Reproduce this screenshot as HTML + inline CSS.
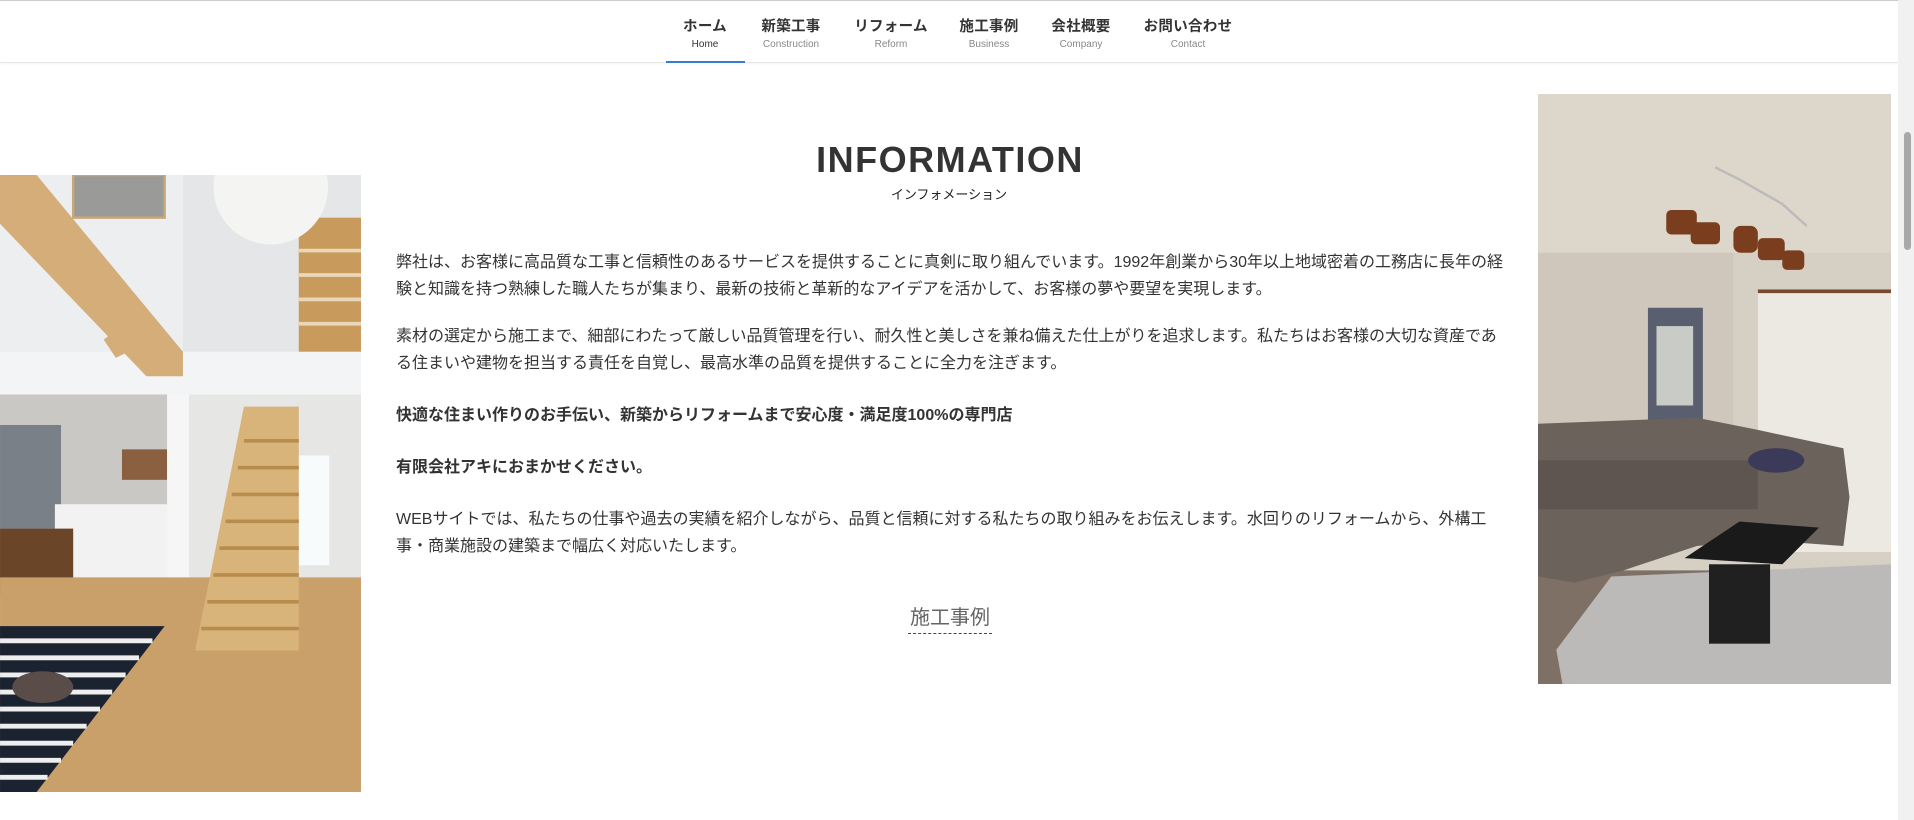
<!DOCTYPE html>
<html><head><meta charset="utf-8">
<style>
*{margin:0;padding:0;box-sizing:border-box}
html,body{width:1914px;height:820px;overflow:hidden;background:#fff;font-family:"Liberation Sans","Noto Sans CJK JP",sans-serif;color:#333}
.topline{position:absolute;left:0;top:0;width:1898px;height:1px;background:#ccc}
nav{position:absolute;left:0;top:1px;width:1898px;height:62px;border-bottom:1px solid #e6e6e6;box-shadow:0 1px 2px rgba(0,0,0,.04)}
.it{position:absolute;top:0;height:62px;text-align:center;transform:translateX(-50%)}
.it b{display:block;margin-top:14px;font-size:14.5px;font-weight:bold;color:#333;white-space:nowrap;letter-spacing:.3px}
.it span{display:block;margin-top:3px;font-size:10px;color:#888;white-space:nowrap}
.ul{position:absolute;left:666px;top:60px;width:79px;height:2px;background:#3b7bcf}
h1{position:absolute;left:0;width:1898px;text-align:center;top:139px;font-size:36px;font-weight:bold;letter-spacing:1.5px;color:#333;padding-left:2px}
.sub{position:absolute;left:0;width:1898px;text-align:center;top:184px;font-size:13px;color:#222}
.txt{position:absolute;left:396px;top:249px;width:1112px;font-size:16px;line-height:27px;color:#333}
.txt p{margin-bottom:20px}
.txt p.m{margin-bottom:25px}
.txt p.b{font-weight:bold;margin-bottom:25px}
.work{position:absolute;left:908px;top:601px;width:84px;text-align:center;font-size:20px;color:#666;border-bottom:1px dashed #444;padding-bottom:3px}
.li{position:absolute;left:0;top:175px;width:361px;height:617px;overflow:hidden}
.ri{position:absolute;left:1538px;top:94px;width:353px;height:590px;overflow:hidden}
.sb{position:absolute;left:1898px;top:0;width:16px;height:820px;background:#f1f1f1}
.th{position:absolute;left:1904px;top:132px;width:7px;height:118px;background:#a8a8a8;border-radius:4px}
</style></head><body>
<div class="topline"></div>
<nav>
<div class="it" style="left:705px"><b>ホーム</b><span style="color:#333">Home</span></div>
<div class="it" style="left:791px"><b>新築工事</b><span>Construction</span></div>
<div class="it" style="left:891px"><b>リフォーム</b><span>Reform</span></div>
<div class="it" style="left:989px"><b>施工事例</b><span>Business</span></div>
<div class="it" style="left:1081px"><b>会社概要</b><span>Company</span></div>
<div class="it" style="left:1188px"><b>お問い合わせ</b><span>Contact</span></div>
<div class="ul"></div>
</nav>

<div class="li"><svg width="361" height="617" viewBox="0 0 296 506">
<rect width="296" height="506" fill="#eceef0"/>
<rect x="60" y="0" width="75" height="35" fill="#9a9a98" stroke="#c8a878" stroke-width="2"/>
<rect x="150" y="0" width="146" height="145" fill="#e4e6e8"/>
<rect x="245" y="35" width="51" height="110" fill="#c89a5c"/>
<g stroke="#e8d8b8" stroke-width="3"><line x1="245" y1="62" x2="296" y2="62"/><line x1="245" y1="82" x2="296" y2="82"/><line x1="245" y1="102" x2="296" y2="102"/><line x1="245" y1="122" x2="296" y2="122"/></g>
<circle cx="222" cy="10" r="47" fill="#f4f4f2"/>
<rect x="0" y="145" width="296" height="35" fill="#f3f4f5"/>
<polygon points="0,0 30,0 150,145 150,165 120,165 0,40" fill="#d4ad78"/>
<polygon points="85,135 105,120 115,140 95,150" fill="#d4ad78"/>
<rect x="0" y="180" width="137" height="150" fill="#c9c8c4"/>
<rect x="0" y="205" width="50" height="85" fill="#7a8088"/>
<rect x="100" y="225" width="37" height="25" fill="#8a6040"/>
<rect x="45" y="270" width="92" height="60" fill="#f2f2f2"/>
<rect x="0" y="290" width="60" height="55" fill="#6b4528"/>
<rect x="137" y="180" width="18" height="215" fill="#f6f6f6"/>
<rect x="155" y="180" width="141" height="215" fill="#e6e6e4"/>
<rect x="245" y="230" width="25" height="90" fill="#f8fbfc"/>
<polygon points="0,330 296,330 296,506 0,506" fill="#c9a06a"/>
<polygon points="0,370 135,370 30,506 0,506" fill="#1c2330"/>
<g stroke="#eee" stroke-width="4"><line x1="0" y1="382" x2="125" y2="382"/><line x1="0" y1="396" x2="114" y2="396"/><line x1="0" y1="410" x2="103" y2="410"/><line x1="0" y1="424" x2="92" y2="424"/><line x1="0" y1="438" x2="82" y2="438"/><line x1="0" y1="452" x2="71" y2="452"/><line x1="0" y1="466" x2="60" y2="466"/><line x1="0" y1="480" x2="50" y2="480"/><line x1="0" y1="494" x2="39" y2="494"/></g>
<ellipse cx="35" cy="420" rx="25" ry="13" fill="#5a4c48"/>
<polygon points="160,390 200,190 245,190 245,390" fill="#d9b47a"/>
<g stroke="#b88c4c" stroke-width="3"><line x1="165" y1="372" x2="245" y2="372"/><line x1="170" y1="350" x2="245" y2="350"/><line x1="175" y1="328" x2="245" y2="328"/><line x1="180" y1="306" x2="245" y2="306"/><line x1="185" y1="284" x2="245" y2="284"/><line x1="190" y1="262" x2="245" y2="262"/><line x1="195" y1="240" x2="245" y2="240"/><line x1="200" y1="218" x2="245" y2="218"/></g>
</svg></div>

<div class="ri"><svg width="353" height="590" viewBox="0 0 289 483">
<rect width="289" height="483" fill="#d6cfc4"/>
<rect width="289" height="130" fill="#ddd6cb"/>
<rect x="0" y="130" width="160" height="160" fill="#cfc7bb"/>
<rect x="180" y="160" width="109" height="215" fill="#ece8e2"/>
<rect x="180" y="160" width="109" height="3" fill="#7a4a30"/>
<rect x="90" y="175" width="45" height="95" fill="#5a5f70"/>
<rect x="97" y="190" width="30" height="65" fill="#c9ccc6"/>
<polyline points="145,60 165,70 200,90 220,108" fill="none" stroke="#bbb" stroke-width="2"/>
<g fill="#7a3e1e"><rect x="105" y="95" width="25" height="20" rx="4"/><rect x="125" y="105" width="24" height="18" rx="4"/><rect x="160" y="108" width="20" height="22" rx="6"/><rect x="180" y="118" width="22" height="18" rx="4"/><rect x="200" y="128" width="18" height="16" rx="4"/></g>
<rect x="0" y="390" width="289" height="93" fill="#7f7066"/>
<polygon points="15,455 60,395 289,385 289,483 20,483" fill="#bcbab8"/>
<path d="M0 270 L130 265 L180 275 L250 290 L255 330 L250 370 L180 365 L130 370 L70 390 L30 400 L0 395 Z" fill="#6c625c"/>
<rect x="0" y="300" width="180" height="40" fill="#5e5550"/>
<ellipse cx="195" cy="300" rx="23" ry="10" fill="#3b3a58"/>
<polygon points="120,380 165,350 230,355 200,385" fill="#1a1a1a"/>
<rect x="140" y="385" width="50" height="65" fill="#202020"/>
</svg></div>

<h1>INFORMATION</h1>
<div class="sub">インフォメーション</div>

<div class="txt">
<p>弊社は、お客様に高品質な工事と信頼性のあるサービスを提供することに真剣に取り組んでいます。1992年創業から30年以上地域密着の工務店に長年の経験と知識を持つ熟練した職人たちが集まり、最新の技術と革新的なアイデアを活かして、お客様の夢や要望を実現します。</p>
<p class="m">素材の選定から施工まで、細部にわたって厳しい品質管理を行い、耐久性と美しさを兼ね備えた仕上がりを追求します。私たちはお客様の大切な資産である住まいや建物を担当する責任を自覚し、最高水準の品質を提供することに全力を注ぎます。</p>
<p class="b">快適な住まい作りのお手伝い、新築からリフォームまで安心度・満足度100%の専門店</p>
<p class="b">有限会社アキにおまかせください。</p>
<p>WEBサイトでは、私たちの仕事や過去の実績を紹介しながら、品質と信頼に対する私たちの取り組みをお伝えします。水回りのリフォームから、外構工事・商業施設の建築まで幅広く対応いたします。</p>
</div>

<div class="work">施工事例</div>

<div class="sb"></div><div class="th"></div>
</body></html>
